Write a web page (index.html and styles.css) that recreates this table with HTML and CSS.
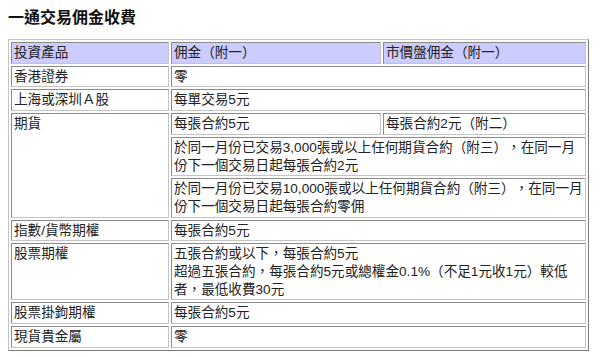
FILE: index.html
```html
<!DOCTYPE html>
<html lang="zh-Hant">
<head>
  <meta charset="UTF-8" />
  <title>一通交易佣金收費</title>
  <link rel="stylesheet" href="styles.css">
</head>
<body>
  <h1 class="title">一通交易佣金收費</h1>

  <table class="fee-table">
    <colgroup>
      <col class="col-product">
      <col class="col-fee">
      <col class="col-market">
    </colgroup>
    <tr class="head">
      <td>投資產品</td>
      <td>佣金（附一）</td>
      <td>市價盤佣金（附一）</td>
    </tr>
    <tr>
      <td>香港證券</td>
      <td colspan="2">零</td>
    </tr>
    <tr>
      <td>上海或深圳Ａ股</td>
      <td colspan="2">每單交易5元</td>
    </tr>
    <tr>
      <td rowspan="3">期貨</td>
      <td>每張合約5元</td>
      <td>每張合約2元（附二）</td>
    </tr>
    <tr>
      <td colspan="2">於同一月份已交易3,000張或以上任何期貨合約（附三），在同一月份下一個交易日起每張合約2元</td>
    </tr>
    <tr>
      <td colspan="2">於同一月份已交易10,000張或以上任何期貨合約（附三），在同一月份下一個交易日起每張合約零佣</td>
    </tr>
    <tr>
      <td>指數/貨幣期權</td>
      <td colspan="2">每張合約5元</td>
    </tr>
    <tr>
      <td>股票期權</td>
      <td colspan="2">五張合約或以下，每張合約5元<br>超過五張合約，每張合約5元或總權金0.1%（不足1元收1元）較低者，最低收費30元</td>
    </tr>
    <tr>
      <td>股票掛鉤期權</td>
      <td colspan="2">每張合約5元</td>
    </tr>
    <tr>
      <td>現貨貴金屬</td>
      <td colspan="2">零</td>
    </tr>
  </table>
</body>
</html>
```

FILE: styles.css
```css
html, body {
  background: #fff;
}
body {
  margin: 8px;
  font-family: "Liberation Sans", "Noto Sans CJK TC", sans-serif;
  color: #222;
}

.title {
  margin: 0 0 11px;
  font-size: 16px;
  line-height: 20px;
  font-weight: bold;
  color: #111;
}

.fee-table {
  width: 581px;
  table-layout: fixed;
  border-collapse: separate;
  border-spacing: 2px;
  border: 1px solid;
  border-color: #c4c4c4 #7a7a7a #7a7a7a #c4c4c4;
  font-size: 13.6px;
  line-height: 17.7px;
  text-spacing-trim: space-all;
}
.col-product {
  width: 158px;
}
.col-fee {
  width: 210px;
}
.fee-table td {
  padding: 1px 2px;
  vertical-align: top;
  text-align: left;
  border: 1px solid;
  border-color: #8a8a8a #c4c4c4 #c4c4c4 #8a8a8a;
  background: #fff;
}
.fee-table .head td {
  background: #ccccff;
}
```
